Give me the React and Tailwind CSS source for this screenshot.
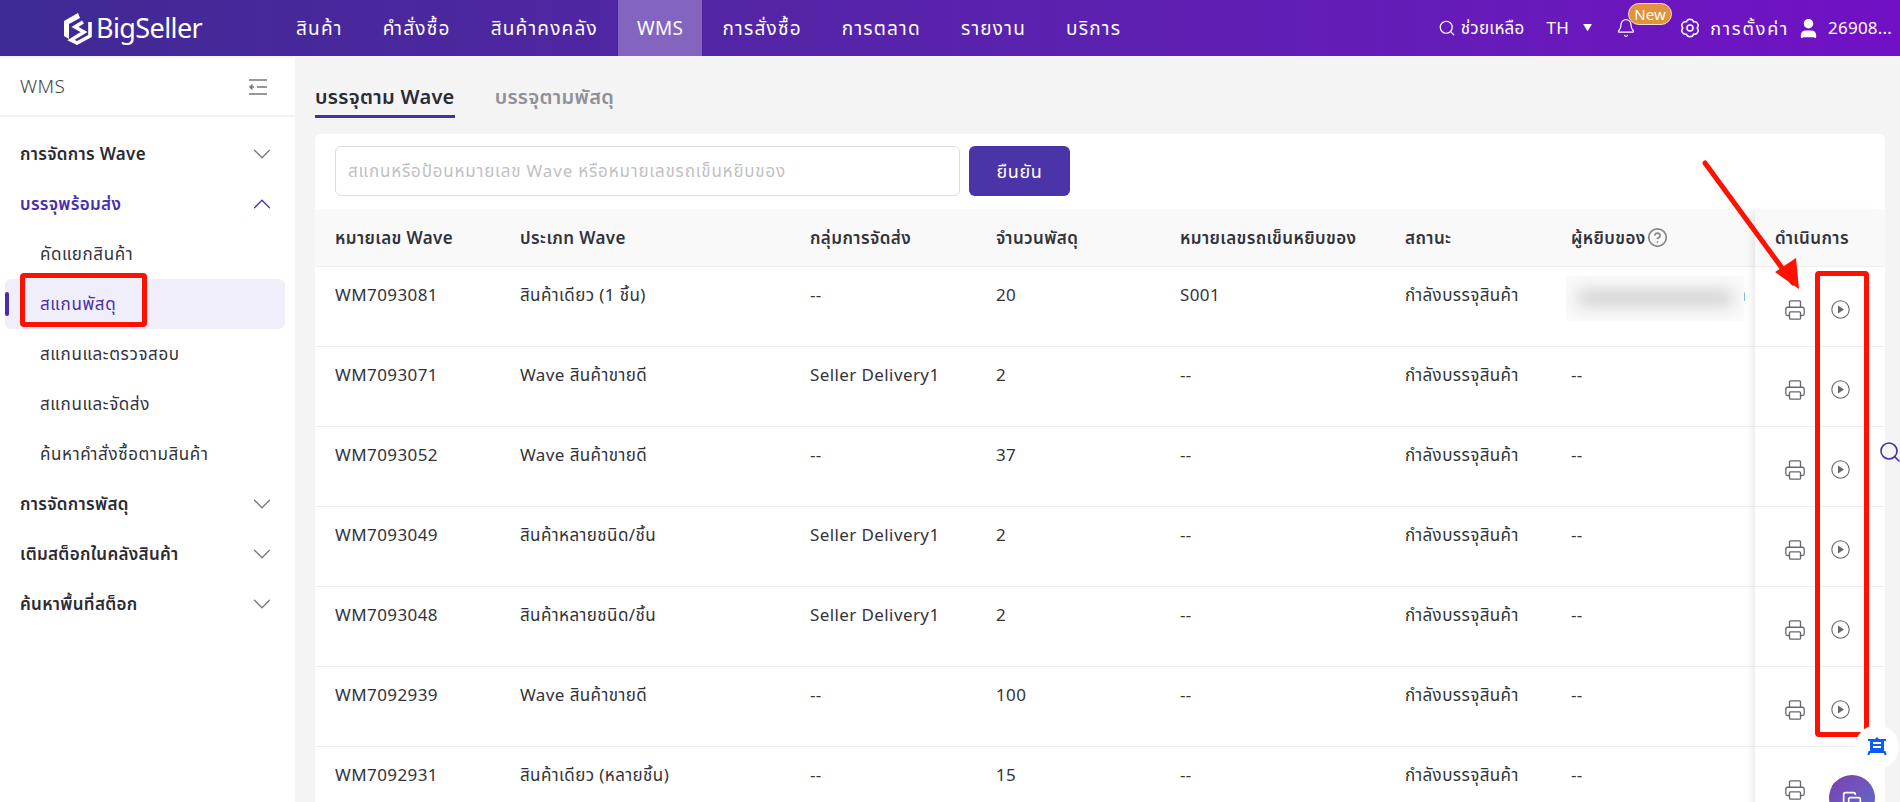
import React from 'react';
import { ChevronDown, ChevronUp, Search, Bell, User, Printer, CircleHelp, Copy } from 'lucide-react';

const font = 'font-["Noto_Sans","Noto_Sans_Thai","Noto_Sans_CJK_SC",sans-serif]';

const nav = ['สินค้า', 'คำสั่งซื้อ', 'สินค้าคงคลัง', 'WMS', 'การสั่งซื้อ', 'การตลาด', 'รายงาน', 'บริการ'];

const rows = [
  ['WM7093081', 'สินค้าเดียว (1 ชิ้น)', '--', '20', 'S001'],
  ['WM7093071', 'Wave สินค้าขายดี', 'Seller Delivery1', '2', '--'],
  ['WM7093052', 'Wave สินค้าขายดี', '--', '37', '--'],
  ['WM7093049', 'สินค้าหลายชนิด/ชิ้น', 'Seller Delivery1', '2', '--'],
  ['WM7093048', 'สินค้าหลายชนิด/ชิ้น', 'Seller Delivery1', '2', '--'],
  ['WM7092939', 'Wave สินค้าขายดี', '--', '100', '--'],
  ['WM7092931', 'สินค้าเดียว (หลายชิ้น)', '--', '15', '--'],
];

const gridCols = 'grid grid-cols-[185px_290px_186px_184px_225px_166px_184px]';

function Logo() {
  return (
    <svg width="31" height="34" viewBox="0 0 31 34" fill="none" stroke="white" strokeWidth="3.6">
      <path d="M17 2 3 10v15l5 3V13l11-6z" fill="white" stroke="none" />
      <path d="M29 11v14l-13 7-6-3 13-8-9-5 8-5" />
    </svg>
  );
}

function Gear() {
  return (
    <svg width="20" height="20" viewBox="0 0 24 24" fill="none" stroke="white" strokeWidth="1.8" strokeLinejoin="round">
      <path d="M20.500 12A4.400 4.400 0 0 1 16.250 19.360 4.400 4.400 0 0 1 7.750 19.360 4.400 4.400 0 0 1 3.500 12 4.400 4.400 0 0 1 7.750 4.640 4.400 4.400 0 0 1 16.250 4.640 4.400 4.400 0 0 1 20.500 12Z" />
      <circle cx="12" cy="12" r="3.600" />
    </svg>
  );
}

function PlayRound() {
  return (
    <svg width="19" height="19" viewBox="0 0 19 19" fill="none">
      <circle cx="9.500" cy="9.500" r="8.700" stroke="#66666e" strokeWidth="1.100" />
      <path d="M7 5.500 13 9.500 7 13.500z" fill="#66666e" />
    </svg>
  );
}

function MenuGroup({ label, open }) {
  return (
    <div className={`h-[50px] pl-5 pr-[18px] flex items-center justify-between text-[17px] tracking-[0.3px] font-semibold ${open ? 'text-[#4a2ea8]' : 'text-[#2b2b33]'}`}>
      <span>{label}</span>
      {open ? <ChevronUp size={30} strokeWidth={1} /> : <ChevronDown size={30} strokeWidth={1} className="text-[#777]" />}
    </div>
  );
}

function SubItem({ label, active }) {
  return (
    <div className={`relative h-[50px] ml-[5px] mr-[10px] pl-[35px] flex items-center text-[17px] tracking-[0.6px] rounded-md ${active ? 'bg-[#f1eefc] text-[#4a2ea8]' : 'text-[#33333b]'}`}>
      {active && <div className="absolute left-0 top-[13px] w-1 h-6 rounded-sm bg-[#4a2ea8]" />}
      {label}
    </div>
  );
}

export default function App() {
  return (
    <div className={`${font} w-[1900px] h-[802px] overflow-hidden relative bg-[#f4f4f4] text-[17px] tracking-[0.4px] text-[#33333b]`}>
      {/* top bar */}
      <div className="h-14 flex items-center bg-gradient-to-r from-[#3f2a93] to-[#7110c5] text-white">
        <div className="w-[276px] pl-[61px] flex items-center gap-1">
          <Logo />
          <span className="text-[27px] font-normal tracking-[-0.6px]">BigSeller</span>
        </div>
        <div className="flex h-full text-[19px] tracking-[1.2px]">
          {nav.map((n) => (
            <div key={n} className={`h-full flex items-center ${n === 'WMS' ? 'px-[19px] tracking-[0.4px] bg-[#8364bf]' : 'px-5'}`}>{n}</div>
          ))}
        </div>
        <div className="ml-auto flex items-center text-[17px] tracking-[0.2px] pr-2">
          <Search size={18} strokeWidth={1.6} />
          <span className="ml-[5px]">ช่วยเหลือ</span>
          <span className="ml-[22px]">TH</span>
          <span className="ml-[14px] text-[9px]">▼</span>
          <div className="relative ml-6 mr-[44px]">
            <Bell size={20} strokeWidth={1.5} />
            <span className="absolute -top-[15px] left-[12px] px-[5px] rounded-full border border-[#f3e3d0] bg-[#e0923c] text-[15px] leading-[20px]">New</span>
          </div>
          <Gear />
          <span className="ml-[10px] text-[18px] tracking-[1.8px]">การตั้งค่า</span>
          <User size={23} fill="white" className="ml-2" />
          <span className="ml-2">26908...</span>
        </div>
      </div>

      <div className="flex h-[746px]">
        {/* side menu */}
        <div className="w-[295px] mt-[2px] bg-white">
          <div className="h-[59px] pl-5 pr-7 flex items-center justify-between text-[19px] font-light text-[#444] border-b-2 border-[#f2f2f2]">
            <span>WMS</span>
            <svg width="18" height="16" viewBox="0 0 18 16" fill="none" stroke="#777" strokeWidth="1.500">
              <path d="M0 1h18M0 15h18M8 8h10" />
              <path d="M5 8H1m2.500-2.500L1 8l2.500 2.500" />
            </svg>
          </div>
          <div className="pt-3">
            <MenuGroup label="การจัดการ Wave" />
            <MenuGroup label="บรรจุพร้อมส่ง" open />
            <SubItem label="คัดแยกสินค้า" />
            <SubItem label="สแกนพัสดุ" active />
            <SubItem label="สแกนและตรวจสอบ" />
            <SubItem label="สแกนและจัดส่ง" />
            <SubItem label="ค้นหาคำสั่งซื้อตามสินค้า" />
            <MenuGroup label="การจัดการพัสดุ" />
            <MenuGroup label="เติมสต็อกในคลังสินค้า" />
            <MenuGroup label="ค้นหาพื้นที่สต็อก" />
          </div>
        </div>

        {/* main */}
        <div className="flex-1 pl-5 pr-[15px] min-w-0">
          <div className="h-[78px] pt-[22px] flex gap-10 text-[20px] tracking-[0.3px] font-semibold">
            <div className="h-[40px] pt-[6px] leading-[26px] border-b-[3px] border-[#4a2ea8] text-[#2b2b33]">บรรจุตาม Wave</div>
            <div className="pt-[6px] leading-[26px] text-[#8f9099]">บรรจุตามพัสดุ</div>
          </div>
          <div className="bg-white rounded-md h-[700px] overflow-hidden relative">
            <div className="h-[75px] pt-3 pl-5 flex gap-[9px]">
              <div className="w-[625px] h-[50px] px-3 flex items-center border border-[#dcdcdc] rounded-md text-[#bfbfc4] text-[17px] tracking-[0.8px]">สแกนหรือป้อนหมายเลข Wave หรือหมายเลขรถเข็นหยิบของ</div>
              <button className="w-[101px] h-[50px] rounded-md bg-[#4b33a8] text-white text-[18px] tracking-[0.6px]">ยืนยัน</button>
            </div>
            <div className={`${gridCols} h-[58px] items-center pl-5 bg-[#f9f9f9] border-b border-[#eee] font-semibold`}>
              <div>หมายเลข Wave</div>
              <div>ประเภท Wave</div>
              <div>กลุ่มการจัดส่ง</div>
              <div>จำนวนพัสดุ</div>
              <div className="whitespace-nowrap">หมายเลขรถเข็นหยิบของ</div>
              <div>สถานะ</div>
              <div className="flex items-center gap-px">ผู้หยิบของ<CircleHelp size={21} className="text-[#888]" /></div>
            </div>
            {rows.map((r, i) => (
              <div key={r[0]} className={`${gridCols} h-20 pl-5 pt-[15px] border-b border-[#eee] whitespace-nowrap`}>
                {r.map((c, j) => <div key={j}>{c}</div>)}
                <div>กำลังบรรจุสินค้า</div>
                <div className={i === 0 ? 'text-right pr-[9px]' : ''}>{i === 0 ? 'า' : '--'}</div>
              </div>
            ))}
            {/* blurred picker name */}
            <div className="absolute left-[1251px] top-[142px] w-[178px] h-[45px] bg-[#fafafa]">
              <div className="mt-[14px] mx-[12px] h-[16px] bg-[#d0d0d0] blur-[8px]" />
            </div>
            {/* fixed action column */}
            <div className="absolute right-0 top-[75px] w-[130px] h-[625px] bg-white shadow-[-6px_0_8px_-4px_rgba(0,0,0,0.1)]">
              <div className="h-[58px] pl-5 flex items-center bg-[#f9f9f9] border-b border-[#eee] font-semibold">ดำเนินการ</div>
              {rows.map((r) => (
                <div key={r[0]} className="h-20 pl-[29px] pt-[32px] flex items-start gap-[25px] border-b border-[#eee] text-[#66666e]">
                  <Printer size={22} strokeWidth={1.4} />
                  <div className="pt-px"><PlayRound /></div>
                </div>
              ))}
            </div>
          </div>
        </div>
      </div>

      {/* annotations over the screenshot */}
      <div className="absolute left-[20px] top-[273px] w-[127px] h-[54px] border-[5px] border-[#ff1000] rounded-sm" />
      <div className="absolute left-[1815px] top-[271px] w-[54px] h-[466px] border-[5px] border-[#ff1000] rounded-sm" />
      <svg className="absolute left-[1690px] top-[150px]" width="125" height="150" viewBox="0 0 125 150">
        <path d="M15 13 103 133" stroke="#ff1000" strokeWidth="5" strokeLinecap="round" />
        <path d="M109 139 85 122 106 108z" fill="#ff1000" />
      </svg>

      {/* floating buttons */}
      <Search size={24} strokeWidth={1.6} className="absolute left-[1878px] top-[440px] text-[#4a2ea8]" />
      <div className="absolute left-[1855px] top-[725px] w-11 h-11 rounded-full bg-white flex items-center justify-center text-[#0b5cf5]">
        <svg width="20" height="20" viewBox="0 0 20 20" fill="currentColor"><path d="M1 2h7l2-2 2 2h7v2h-2v10h1.500l1 4h-2l-.7-2H3.200l-.7 2h-2l1-4H3V4H1zm5 3v2h8V5zm0 4v2h8V9z" /></svg>
      </div>
      <div className="absolute left-[1829px] top-[775px] w-[46px] h-[46px] rounded-full bg-gradient-to-br from-[#7a3fae] to-[#5b6ccc] flex justify-center pt-[16px] text-white">
        <Copy size={20} />
      </div>
    </div>
  );
}
